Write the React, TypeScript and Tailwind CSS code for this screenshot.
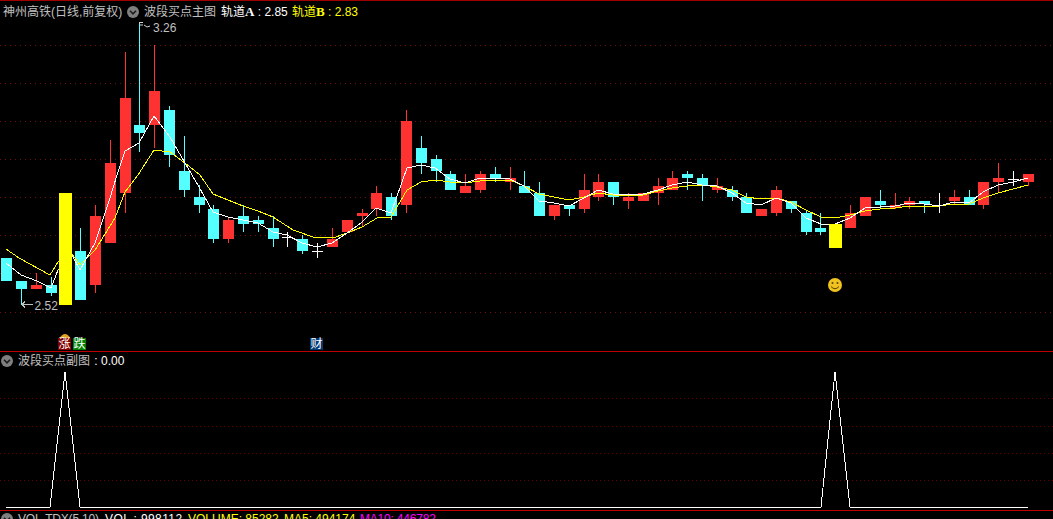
import React from "react";

// kind: r=red, c=cyan, y=yellow, w=doji cross; [bodyTop, bodyBottom, wickTop, wickBottom]
const raw: [string, number, number, number, number][] = [
  ["c",258,281,258,281],["c",281,289,281,305],["r",285,289,273,289],["c",285,293,277,296],["y",193,305,193,305],
  ["c",251,300,228,300],["r",216,285,205,293],["r",163,243,140,243],["r",98,193,52,213],["c",125,133,23,152],
  ["r",91,125,45,148],["c",110,155,106,167],["c",171,190,136,197],["c",197,205,185,213],["c",209,239,205,243],
  ["r",220,239,217,243],["c",216,224,205,232],["c",220,224,216,232],["c",228,239,216,247],["w",237,237,232,247],
  ["c",239,251,235,254],["w",251,251,243,258],["r",239,247,228,247],["r",220,232,220,232],["r",213,216,209,226],
  ["r",193,209,186,216],["c",197,216,193,220],["r",121,205,110,213],["c",148,163,136,174],["c",159,171,155,182],
  ["c",174,190,171,190],["r",186,193,174,193],["r",174,190,171,193],["c",174,178,167,182],["r",178,182,167,190],
  ["c",186,193,171,193],["c",193,216,182,216],["r",205,216,205,220],["c",205,209,205,216],["r",190,209,174,213],
  ["r",182,197,174,201],["c",182,197,182,205],["r",197,201,193,209],["r",193,201,193,201],["r",186,193,178,205],
  ["r",178,190,171,190],["c",174,178,171,190],["c",178,185,174,201],["r",186,190,178,193],["c",190,197,186,201],
  ["c",197,213,193,213],["r",209,216,209,216],["r",190,213,186,216],["c",201,209,201,213],["c",213,232,210,235],
  ["c",228,232,213,235],["y",224,248,224,248],["r",213,228,205,228],["r",197,216,197,216],["c",201,205,190,209],
  ["r",205,208,193,209],["r",201,205,197,209],["c",201,204,201,213],["w",205,205,193,213],["r",197,201,190,205],
  ["c",197,205,190,205],["r",182,205,182,209],["r",178,182,163,192],["w",179,179,171,186],["r",174,182,174,186],
];

const yellowLine = "6,249 19,258 50,275 58,262 72,254 80,265 95,250 115,218 125,192 138,175 154,150 170,152 185,163 200,175 213,194 243,206 258,211 273,217 293,230 313,237 333,238 347,233 362,227 377,218 391,217 407,190 421,182 435,180 450,182 465,183 480,181 495,180 510,180 524,186 539,194 554,197 569,200 584,197 598,193 613,195 628,195 643,195 658,191 672,188 687,186 702,185 717,187 732,190 746,197 761,199 776,198 791,202 806,210 821,217 835,218 850,215 865,211 880,209 895,208 909,206 924,206 939,206 954,204 969,204 983,198 998,193 1013,189 1028,185";
const whiteLine = "6,263 21,275 37,281 51,288 58,270 72,255 80,270 95,243 110,198 117,175 125,151 139,143 154,116 170,137 185,163 199,187 213,212 228,217 243,220 258,223 273,232 287,235 302,243 317,247 332,243 347,233 361,223 376,208 391,213 407,168 421,165 435,168 450,179 465,183 480,178 495,178 510,179 524,186 539,201 554,203 569,206 584,198 598,190 613,194 628,195 643,194 658,190 672,185 687,182 702,185 717,186 732,193 746,203 761,205 776,198 791,203 806,218 821,224 835,224 850,218 865,208 880,207 895,206 909,203 924,204 939,206 954,202 969,203 983,192 998,185 1013,182 1028,178";
const spike = "6,507 50,507 65,372 80,507 821,507 835,372 850,507 1028,507";

const colors: Record<string, string> = { r: "#ff3232", c: "#54ffff", y: "#ffff00", w: "#ffffff" };
const cx = (i: number) => Math.round(6.2 + 14.805 * i);

function Dots({ ys, color, gap }: { ys: number[]; color: string; gap: string }) {
  return (
    <>
      {ys.map((y) => (
        <line key={y} x1={0} x2={1053} y1={y + 0.5} y2={y + 0.5} stroke={color} strokeDasharray={gap} shapeRendering="crispEdges" />
      ))}
    </>
  );
}

function Candle({ i }: { i: number }) {
  const [k, top, bot, wt, wb] = raw[i];
  const x = cx(i);
  const c = colors[k];
  if (k === "y") return <rect x={x - 6} y={top} width={13} height={bot - top} fill={c} shapeRendering="crispEdges" />;
  if (k === "w")
    return (
      <g fill={c} shapeRendering="crispEdges">
        <rect x={x} y={wt} width={1} height={wb - wt} />
        <rect x={x - 5} y={top} width={11} height={1} />
      </g>
    );
  return (
    <g fill={c} shapeRendering="crispEdges">
      <rect x={x} y={wt} width={1} height={wb - wt} />
      <rect x={x - 5} y={top} width={11} height={bot - top} />
    </g>
  );
}

function Chevron() {
  return (
    <svg width="12" height="12" viewBox="0 0 12 12" className="shrink-0">
      <circle cx="6" cy="6" r="6" fill="#7f7f7f" />
      <path d="M3 4.8 L6 7.8 L9 4.8" fill="none" stroke="#1c1c1c" strokeWidth="1.6" />
    </svg>
  );
}

export default function App() {
  const font = "font-['Liberation_Sans','Noto_Sans_CJK_SC',sans-serif]";
  return (
    <div className={`w-[1053px] h-[519px] bg-black overflow-hidden flex flex-col text-xs leading-4 ${font}`}>
      {/* main pane */}
      <section className="relative h-[351px] shrink-0 border-t border-[#a00000]">
        <svg className="block w-full h-[350px]" viewBox="0 1 1053 350">
          <Dots ys={[45, 83, 121, 159, 197, 235, 273, 312]} color="#701010" gap="1 4" />
          {raw.map((_, i) => (raw[i][0] !== "y" ? <Candle key={i} i={i} /> : null))}
          <polyline points={yellowLine} fill="none" stroke="#ffff00" shapeRendering="crispEdges" />
          <polyline points={whiteLine} fill="none" stroke="#ffffff" shapeRendering="crispEdges" />
          {raw.map((_, i) => (raw[i][0] === "y" ? <Candle key={i} i={i} /> : null))}
          {/* high flag */}
          <path d="M139.5 22 V24 M140 22.5 H143 M140 25 H143 M144 25 L147 27 L150 26" stroke="#d0d0d0" fill="none" />
          <text x="153" y="32" fill="#c0c0c0" fontSize="12" fontFamily="Liberation Sans">3.26</text>
          {/* low arrow */}
          <path d="M22 304.5 H33 M22 304.5 L25 301.5 M22 304.5 L25 307.5" stroke="#c0c0c0" fill="none" shapeRendering="crispEdges" />
          <text x="34.5" y="310" fill="#c0c0c0" fontSize="12" fontFamily="Liberation Sans">2.52</text>
          {/* smiley */}
          <circle cx="835" cy="285" r="7" fill="#f0c31e" />
          <circle cx="832.5" cy="283" r="1" fill="#5a4300" />
          <circle cx="837.5" cy="283" r="1" fill="#5a4300" />
          <path d="M831 286.5 Q835 291 839 286.5" stroke="#5a4300" strokeWidth="1" fill="none" />
          {/* gold cap behind the rise marker */}
          <path d="M59 339 Q65 329 71 339 Z" fill="#e0a020" />
        </svg>

        <header className="absolute left-[3px] top-[3px] flex items-center whitespace-nowrap text-[#c0c0c0]">
          <span className="w-[123px]">神州高铁(日线,前复权)</span>
          <span className="ml-[1px]"><Chevron /></span>
          <span className="ml-[5px] w-[72px]">波段买点主图</span>
          <span className="ml-[5px] w-[71px] text-white">轨道<b className="text-[13px] font-['Liberation_Serif'] font-bold">A</b> : 2.85</span>
          <span className="text-[#ffff00]">轨道<b className="text-[13px] font-['Liberation_Serif'] font-bold">B</b> : 2.83</span>
        </header>

        <span className="absolute left-[58px] top-[337px] w-[13px] h-[12px] bg-[#800000] text-white leading-none flex items-center justify-center">涨</span>
        <span className="absolute left-[73px] top-[337px] w-[13px] h-[12px] bg-[#008000] text-white leading-none flex items-center justify-center">跌</span>
        <span className="absolute left-[310px] top-[337px] w-[13px] h-[12px] bg-[#003a70] text-white leading-none flex items-center justify-center">财</span>
      </section>

      {/* sub pane */}
      <section className="relative h-[159px] shrink-0 border-t border-[#c00000]">
        <svg className="block w-full h-[158px]" viewBox="0 352 1053 158">
          <Dots ys={[398, 426, 453, 480]} color="#600000" gap="1 3" />
          <polyline points={spike} fill="none" stroke="#ffffff" shapeRendering="crispEdges" />
        </svg>
        <header className="absolute left-[1px] top-[1px] flex items-center gap-[5px] whitespace-nowrap text-[#c0c0c0]">
          <Chevron />
          <span>波段买点副图<span className="text-white ml-[1px]"> : 0.00</span></span>
        </header>
      </section>

      {/* volume pane, cut off by the window */}
      <section className="flex items-center whitespace-nowrap border-t border-[#c00000] pl-[1px] text-[#c0c0c0]">
        <Chevron />
        <span className="ml-[5px] w-[87px] tracking-[-0.2px]">VOL-TDX(5,10)</span>
        <span className="w-[83px] text-white tracking-[0.4px]">VOL : 998112</span>
        <span className="w-[96px] text-[#ffff00]">VOLUME: 85282</span>
        <span className="w-[76px] text-[#ffff00]">MA5: 494174</span>
        <span className="text-[#ff00ff] tracking-[-0.2px]">MA10: 446782</span>
      </section>
    </div>
  );
}
